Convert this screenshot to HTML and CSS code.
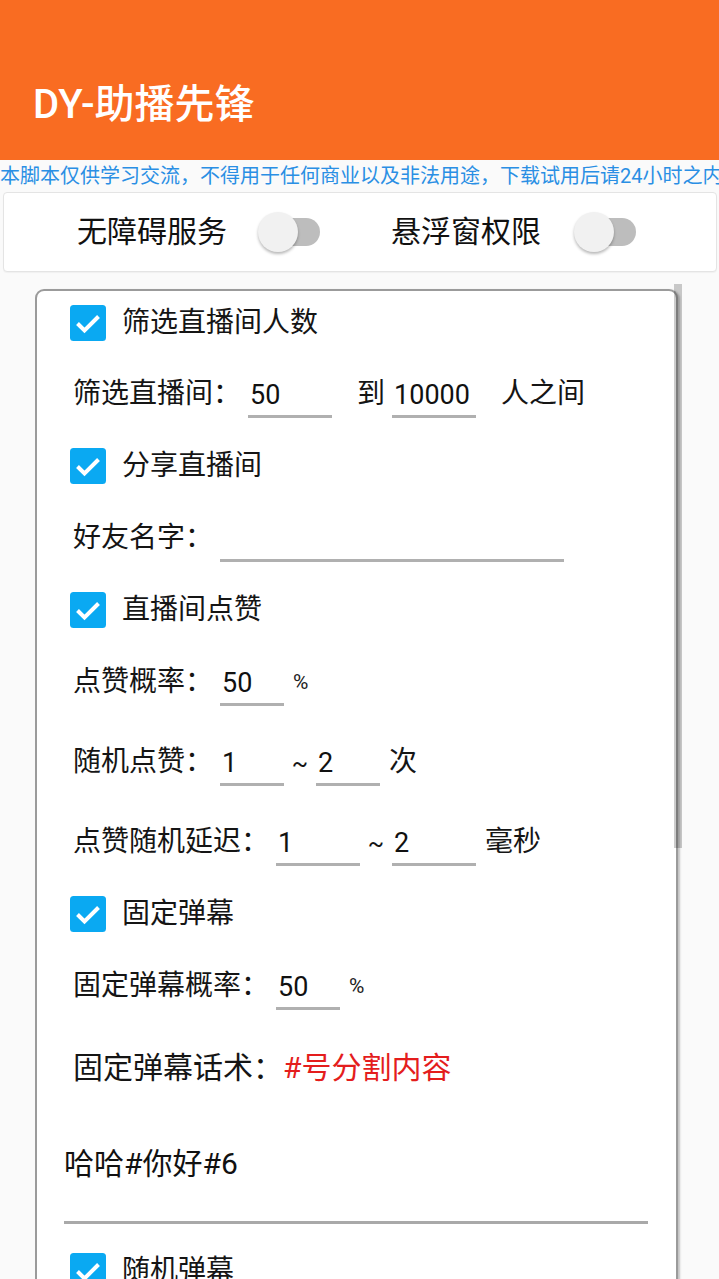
FILE: index.html
```html
<!DOCTYPE html>
<html lang="zh-CN">
<head>
<meta charset="utf-8">
<title>DY-助播先锋</title>
<link rel="stylesheet" href="styles.css">
</head>
<body>
<div class="app">
  <header class="toolbar"><h1 class="title">DY-助播先锋</h1></header>
  <div class="notice">本脚本仅供学习交流，不得用于任何商业以及非法用途，下载试用后请24小时之内删除！</div>
  <div class="perm-card">
    <span class="perm-label">无障碍服务</span>
    <span class="switch"><span class="track"></span><span class="thumb"></span></span>
    <span class="perm-label second">悬浮窗权限</span>
    <span class="switch switch-second"><span class="track"></span><span class="thumb"></span></span>
  </div>

  <div class="scroll-area">
    <div class="settings-card">
      <div class="check-row first">
        <span class="checkbox"><svg viewBox="0 0 36 36" width="36" height="36"><rect width="36" height="36" rx="3.5" fill="#0AA9F2"/><polyline points="7.5,18.5 14.5,25.5 28.5,11.5" fill="none" stroke="#fff" stroke-width="4"/></svg></span>
        <span class="check-label">筛选直播间人数</span>
      </div>
      <div class="field-row">
        <span class="label">筛选直播间：</span>
        <span class="input w84">50</span>
        <span class="mid-text">到</span>
        <span class="input w84">10000</span>
        <span class="mid-text after">人之间</span>
      </div>

      <div class="check-row">
        <span class="checkbox"><svg viewBox="0 0 36 36" width="36" height="36"><rect width="36" height="36" rx="3.5" fill="#0AA9F2"/><polyline points="7.5,18.5 14.5,25.5 28.5,11.5" fill="none" stroke="#fff" stroke-width="4"/></svg></span>
        <span class="check-label">分享直播间</span>
      </div>
      <div class="field-row">
        <span class="label">好友名字：</span>
        <span class="input w344"></span>
      </div>

      <div class="check-row">
        <span class="checkbox"><svg viewBox="0 0 36 36" width="36" height="36"><rect width="36" height="36" rx="3.5" fill="#0AA9F2"/><polyline points="7.5,18.5 14.5,25.5 28.5,11.5" fill="none" stroke="#fff" stroke-width="4"/></svg></span>
        <span class="check-label">直播间点赞</span>
      </div>
      <div class="field-row">
        <span class="label">点赞概率：</span>
        <span class="input w64">50</span>
        <span class="percent">%</span>
      </div>
      <div class="field-row">
        <span class="label">随机点赞：</span>
        <span class="input w64">1</span>
        <span class="tilde">~</span>
        <span class="input w64">2</span>
        <span class="unit">次</span>
      </div>
      <div class="field-row">
        <span class="label">点赞随机延迟：</span>
        <span class="input w84">1</span>
        <span class="tilde">~</span>
        <span class="input w84">2</span>
        <span class="unit">毫秒</span>
      </div>

      <div class="check-row">
        <span class="checkbox"><svg viewBox="0 0 36 36" width="36" height="36"><rect width="36" height="36" rx="3.5" fill="#0AA9F2"/><polyline points="7.5,18.5 14.5,25.5 28.5,11.5" fill="none" stroke="#fff" stroke-width="4"/></svg></span>
        <span class="check-label">固定弹幕</span>
      </div>
      <div class="field-row">
        <span class="label">固定弹幕概率：</span>
        <span class="input w64">50</span>
        <span class="percent">%</span>
      </div>
      <div class="script-row">
        <span class="script-label">固定弹幕话术：</span><span class="hint">#号分割内容</span>
      </div>
      <div class="textarea">哈哈#你好#6</div>

      <div class="check-row last">
        <span class="checkbox"><svg viewBox="0 0 36 36" width="36" height="36"><rect width="36" height="36" rx="3.5" fill="#0AA9F2"/><polyline points="7.5,18.5 14.5,25.5 28.5,11.5" fill="none" stroke="#fff" stroke-width="4"/></svg></span>
        <span class="check-label">随机弹幕</span>
      </div>
      <div class="field-row">
        <span class="label">随机弹幕概率：</span>
        <span class="input w64">50</span>
        <span class="percent">%</span>
      </div>
    </div>
    <div class="scrollbar"></div>
  </div>
</div>
</body>
</html>
```

FILE: styles.css
```css
* { box-sizing: border-box; }

html, body {
  margin: 0;
  padding: 0;
  width: 719px;
  height: 1279px;
  overflow: hidden;
  background: #fafafa;
  font-family: Roboto, "Noto Sans CJK SC", sans-serif;
  color: #151515;
}

.app {
  width: 719px;
  height: 1279px;
  overflow: hidden;
}

.toolbar {
  height: 160px;
  padding-top: 50px;
  padding-left: 33px;
  background: #f96c22;
  display: flex;
  align-items: center;
}

.title {
  margin: 0;
  font-size: 40px;
  font-weight: 500;
  line-height: 48px;
  color: #ffffff;
}

.notice {
  height: 32px;
  line-height: 32px;
  font-size: 20px;
  color: #2a8fe4;
  white-space: nowrap;
  overflow: hidden;
}

.perm-card {
  margin: 0 2px 0 3px;
  height: 80px;
  border: 1px solid #e4e4e4;
  border-radius: 4px;
  background: #ffffff;
  display: flex;
  align-items: center;
  padding-left: 73px;
  box-shadow: 0 1px 1px rgba(0, 0, 0, 0.04);
}

.perm-label {
  font-size: 30px;
  line-height: 40px;
  color: #111;
}

.perm-label.second {
  margin-left: 71px;
}

.switch {
  position: relative;
  width: 62px;
  height: 40px;
  margin-left: 31px;
  display: flex;
  align-items: center;
}

.switch-second {
  margin-left: 33px;
}

.track {
  margin-left: 6px;
  width: 56px;
  height: 28px;
  border-radius: 14px;
  background: #bdbdbd;
}

.thumb {
  position: absolute;
  left: 0;
  top: 0;
  width: 40px;
  height: 40px;
  border-radius: 50%;
  background: #f1f1f1;
  box-shadow: 0 2px 3px rgba(0, 0, 0, 0.28);
}

.scroll-area {
  position: relative;
  margin-top: 17px;
  margin-left: 35px;
  width: 643px;
}

.settings-card {
  background: #ffffff;
  border: 2px solid #9b9b9b;
  border-bottom: none;
  border-radius: 9px 9px 0 0;
  padding-left: 36px;
  box-shadow: 2px 1px 2px rgba(0, 0, 0, 0.22);
}

.check-row {
  height: 64px;
  display: flex;
  align-items: center;
  margin-left: -3px;
}

.check-row.first {
  height: 63px;
}

.check-row.last {
  margin-top: 15px;
}

.checkbox {
  width: 36px;
  height: 36px;
  display: block;
}

.checkbox svg {
  display: block;
}

.check-label {
  margin-left: 16px;
  font-size: 28px;
  line-height: 40px;
}

.field-row {
  height: 80px;
  display: flex;
  align-items: center;
}

.label {
  font-size: 28px;
  line-height: 40px;
  margin-right: 7px;
}

.input {
  height: 48px;
  padding-top: 5px;
  padding-left: 2px;
  line-height: 40px;
  font-size: 27px;
  border-bottom: 3px solid #b0b0b0;
  color: #111;
}

.w64 { width: 64px; }
.w84 { width: 84px; }
.w344 { width: 344px; }

.mid-text {
  font-size: 28px;
  line-height: 40px;
  margin: 0 7px 0 25px;
}

.mid-text.after {
  margin-right: 0;
}

.tilde {
  width: 32px;
  text-align: center;
  font-size: 24px;
  line-height: 40px;
  padding-top: 4px;
}

.unit {
  margin-left: 9px;
  font-size: 28px;
  line-height: 40px;
}

.percent {
  margin-left: 9px;
  font-size: 21px;
  line-height: 40px;
  color: #222;
}

.script-row {
  height: 84px;
  display: flex;
  align-items: center;
  font-size: 30px;
  line-height: 44px;
}

.hint {
  color: #e41d1d;
}

.textarea {
  margin-left: -9px;
  width: 584px;
  padding-top: 34px;
  padding-bottom: 37px;
  font-size: 30px;
  line-height: 40px;
  border-bottom: 3px solid #a9a9a9;
  color: #111;
}

.scrollbar {
  position: absolute;
  top: -5px;
  left: 639px;
  width: 8px;
  height: 564px;
  background: rgba(0, 0, 0, 0.2);
}
```
